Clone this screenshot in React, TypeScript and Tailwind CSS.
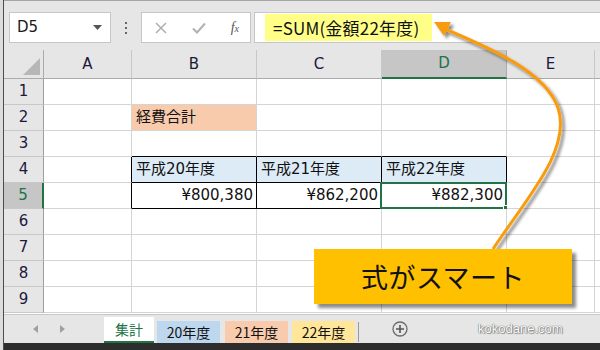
import React from "react";

const F = { fontFamily: '"Noto Sans CJK JP", "Noto Sans", sans-serif' };
const G = { fontFamily: '"DejaVu Sans", "Noto Sans CJK JP", sans-serif' };

const cols = ["A", "B", "C", "D", "E"];
const widths = ["w-[88px]", "w-[125px]", "w-[125px]", "w-[125px]", "w-[88px]"];

type CellSpec = {
  text?: string;
  bg?: string;
  bcls?: string;
  right?: boolean;
  selected?: boolean;
};

function rowCells(r: number): CellSpec[] {
  const base: CellSpec[] = [{}, {}, {}, {}, {}];
  if (r === 2) base[1] = { text: "経費合計", bg: "bg-[#f8cbad]" };
  if (r === 3) {
    base[1] = { bcls: "border-b-black" };
    base[2] = { bcls: "border-b-black" };
    base[3] = { bcls: "border-b-black" };
  }
  if (r === 4) {
    base[0] = { bcls: "border-r-black" };
    base[1] = { text: "平成20年度", bg: "bg-[#ddebf7]", bcls: "border-r-black border-b-black" };
    base[2] = { text: "平成21年度", bg: "bg-[#ddebf7]", bcls: "border-r-black border-b-black" };
    base[3] = { text: "平成22年度", bg: "bg-[#ddebf7]", bcls: "border-r-black border-b-black" };
  }
  if (r === 5) {
    base[0] = { bcls: "border-r-black" };
    base[1] = { text: "¥800,380", right: true, bcls: "border-r-black border-b-black" };
    base[2] = { text: "¥862,200", right: true, bcls: "border-r-black border-b-black" };
    base[3] = { text: "¥882,300", right: true, selected: true, bcls: "border-r-black border-b-black" };
  }
  return base;
}

export default function App() {
  return (
    <div className="relative w-[600px] h-[350px] overflow-hidden bg-[#e6e6e6] flex" style={F}>
      {/* left window edge */}
      <div className="w-[4px] h-full bg-[#dcdcdc] border-r border-[#4d4d4d] shrink-0" />
      <div className="flex-1 flex flex-col min-w-0">
        {/* toolbar */}
        <div className="h-[50px] border-t border-[#a6a6a6] flex items-start pt-[11px] pl-[5px] gap-0">
          <div className="w-[102px] h-[31px] bg-white border border-[#c6c6c6] flex items-center justify-between pl-[7px] pr-[8px]">
            <span className="text-[15px] text-[#1a1a1a] leading-none" style={G}>D5</span>
            <svg width="9" height="5" viewBox="0 0 9 5"><path d="M0 0 L9 0 L4.5 5 Z" fill="#555" /></svg>
          </div>
          <div className="w-[30px] h-[31px] flex flex-col items-center justify-center gap-[3px]">
            <div className="w-[2px] h-[2px] bg-[#666]" />
            <div className="w-[2px] h-[2px] bg-[#666]" />
            <div className="w-[2px] h-[2px] bg-[#666]" />
          </div>
          <div className="w-[110px] h-[31px] bg-white border border-[#c6c6c6] flex items-center justify-between pl-[13px] pr-[11px]">
            <svg width="12" height="12" viewBox="0 0 12 12"><path d="M1 1 L11 11 M11 1 L1 11" stroke="#b0b0b0" strokeWidth="1.6" /></svg>
            <svg width="14" height="12" viewBox="0 0 14 12"><path d="M1 6.5 L5 10.5 L13 1.5" stroke="#b0b0b0" strokeWidth="2" fill="none" /></svg>
            <span className="text-[14px] italic text-[#555] leading-none" style={{ fontFamily: '"Liberation Serif", serif' }}>
              f<span className="text-[10px]">x</span>
            </span>
          </div>
          <div className="ml-[3px] flex-1 h-[31px] bg-white border border-[#c6c6c6] border-r-0 flex items-center pl-[10px]">
            <div className="h-[27px] w-[167px] bg-[#ffff88] flex items-center pl-[8px]">
              <span className="text-[17px] text-[#111] leading-none tracking-[0.2px]">=SUM(金額22年度)</span>
            </div>
          </div>
        </div>

        {/* column header row */}
        <div className="flex h-[29px]">
          <div className="w-[40px] h-full border-r border-b border-[#ababab] bg-[#e6e6e6] relative flex items-end justify-end p-[3px]">
            <svg width="17" height="17" viewBox="0 0 17 17"><path d="M17 0 L17 17 L0 17 Z" fill="#b7b7b7" /></svg>
          </div>
          {cols.map((c, i) => (
            <div
              key={c}
              style={G}
              className={`${widths[i]} h-full border-r border-b flex items-center justify-center text-[15px] ${
                c === "D"
                  ? "bg-[#c6c6c6] border-b-2 border-b-[#217346] border-r-[#ababab] text-[#217346]"
                  : "bg-[#e6e6e6] border-[#ababab] border-r-[#c8c8c8] text-[#1a1a3a]"
              }`}
            >
              {c}
            </div>
          ))}
          <div className="flex-1 h-full bg-[#e6e6e6] border-b border-[#ababab]" />
        </div>

        {/* rows */}
        {[1, 2, 3, 4, 5, 6, 7, 8, 9].map((r) => {
          const cells = rowCells(r);
          return (
            <div key={r} className="flex h-[26px]">
              <div
                style={G}
                className={`w-[40px] h-full border-b border-[#c8c8c8] flex items-center justify-center text-[15px] ${
                  r === 5
                    ? "bg-[#c6c6c6] border-r-2 border-r-[#217346] text-[#217346]"
                    : "bg-[#e6e6e6] border-r border-r-[#9e9e9e] text-[#1a1a3a]"
                }`}
              >
                {r}
              </div>
              {cells.map((cell, i) => (
                <div
                  key={i}
                  style={G}
                  className={`${widths[i]} h-full relative border-r border-b border-[#d4d4d4] flex items-center text-[15px] text-[#111] leading-none ${
                    cell.bg ?? "bg-white"
                  } ${cell.right ? "justify-end pr-[3px]" : "pl-[4px]"} ${cell.bcls ?? ""}`}
                >
                  {cell.text}
                  {cell.selected && (
                    <div className="absolute left-[-2px] top-[-1px] right-[-1px] bottom-[-1px] border-2 border-[#217346]">
                      <div className="absolute right-[-4px] bottom-[-4px] w-[6px] h-[6px] bg-[#217346] border border-white" />
                    </div>
                  )}
                </div>
              ))}
              <div className="flex-1 h-full bg-white border-b border-[#d4d4d4]" />
            </div>
          );
        })}

        {/* gap strip */}
        <div className="h-[2px] bg-white border-b border-[#c6c6c6]" />

        {/* tab bar */}
        <div className="h-[28px] flex items-end bg-[#e6e6e6] relative">
          <div className="w-[100px] h-full flex items-center pl-[29px] gap-[22px]">
            <svg width="5" height="8" viewBox="0 0 5 8"><path d="M5 0 L5 8 L0 4 Z" fill="#a0a0a0" /></svg>
            <svg width="5" height="8" viewBox="0 0 5 8"><path d="M0 0 L0 8 L5 4 Z" fill="#a0a0a0" /></svg>
          </div>
          <div className="w-[50px] h-[26px] bg-white border-b-2 border-[#217346] flex items-center justify-center text-[14px] text-[#217346]">
            集計
          </div>
          <div className="ml-[3px] w-[63px] h-[22px] bg-[#bdd7ee] flex items-center justify-center text-[14px] text-[#111]">20年度</div>
          <div className="ml-[5px] w-[63px] h-[22px] bg-[#f8cbad] flex items-center justify-center text-[14px] text-[#111]">21年度</div>
          <div className="ml-[4px] w-[63px] h-[22px] bg-[#ffe699] flex items-center justify-center text-[14px] text-[#111]">22年度</div>
          <div className="ml-[3px] w-[1px] h-[20px] mb-[1px] bg-[#9a9a9a]" />
          <div className="ml-[33px] h-full flex items-center">
            <svg width="16" height="16" viewBox="0 0 16 16">
              <circle cx="8" cy="8" r="7" fill="none" stroke="#6b6b6b" strokeWidth="1.3" />
              <path d="M8 4 L8 12 M4 8 L12 8" stroke="#555" strokeWidth="1.6" />
            </svg>
          </div>
          <div
            className="ml-[70px] h-full flex items-center text-[13px] text-white"
            style={{ fontFamily: '"Liberation Sans", sans-serif', textShadow: "0 0 1px #666, 0 0 1px #666, 1px 1px 1px #999" }}
          >
            kokodane.com
          </div>
        </div>
        <div className="flex-1 bg-[#2d2d2d]" />
      </div>

      {/* arrow overlay */}
      <svg className="absolute left-0 top-0 pointer-events-none" width="600" height="350" viewBox="0 0 600 350">
        <defs>
          <filter id="sh" x="-20%" y="-20%" width="140%" height="140%">
            <feDropShadow dx="3" dy="3" stdDeviation="1.6" floodColor="#000" floodOpacity="0.45" />
          </filter>
        </defs>
        <g filter="url(#sh)">
          <path
            d="M493 249 C 525 200, 572 150, 558 108 C 546 72, 490 48, 445 29"
            fill="none"
            stroke="#f89c0e"
            strokeWidth="3"
          />
          <path d="M434 22 L451 22 L444 36 Z" fill="#f89c0e" />
        </g>
      </svg>

      {/* callout */}
      <div className="absolute left-[314px] top-[249px] w-[258px] h-[55px] bg-[#ffc000] shadow-[4px_4px_3px_rgba(0,0,0,0.45)] flex items-center justify-center">
        <span className="text-[27px] text-[#111] leading-none tracking-[0.5px]">式がスマート</span>
      </div>
    </div>
  );
}
